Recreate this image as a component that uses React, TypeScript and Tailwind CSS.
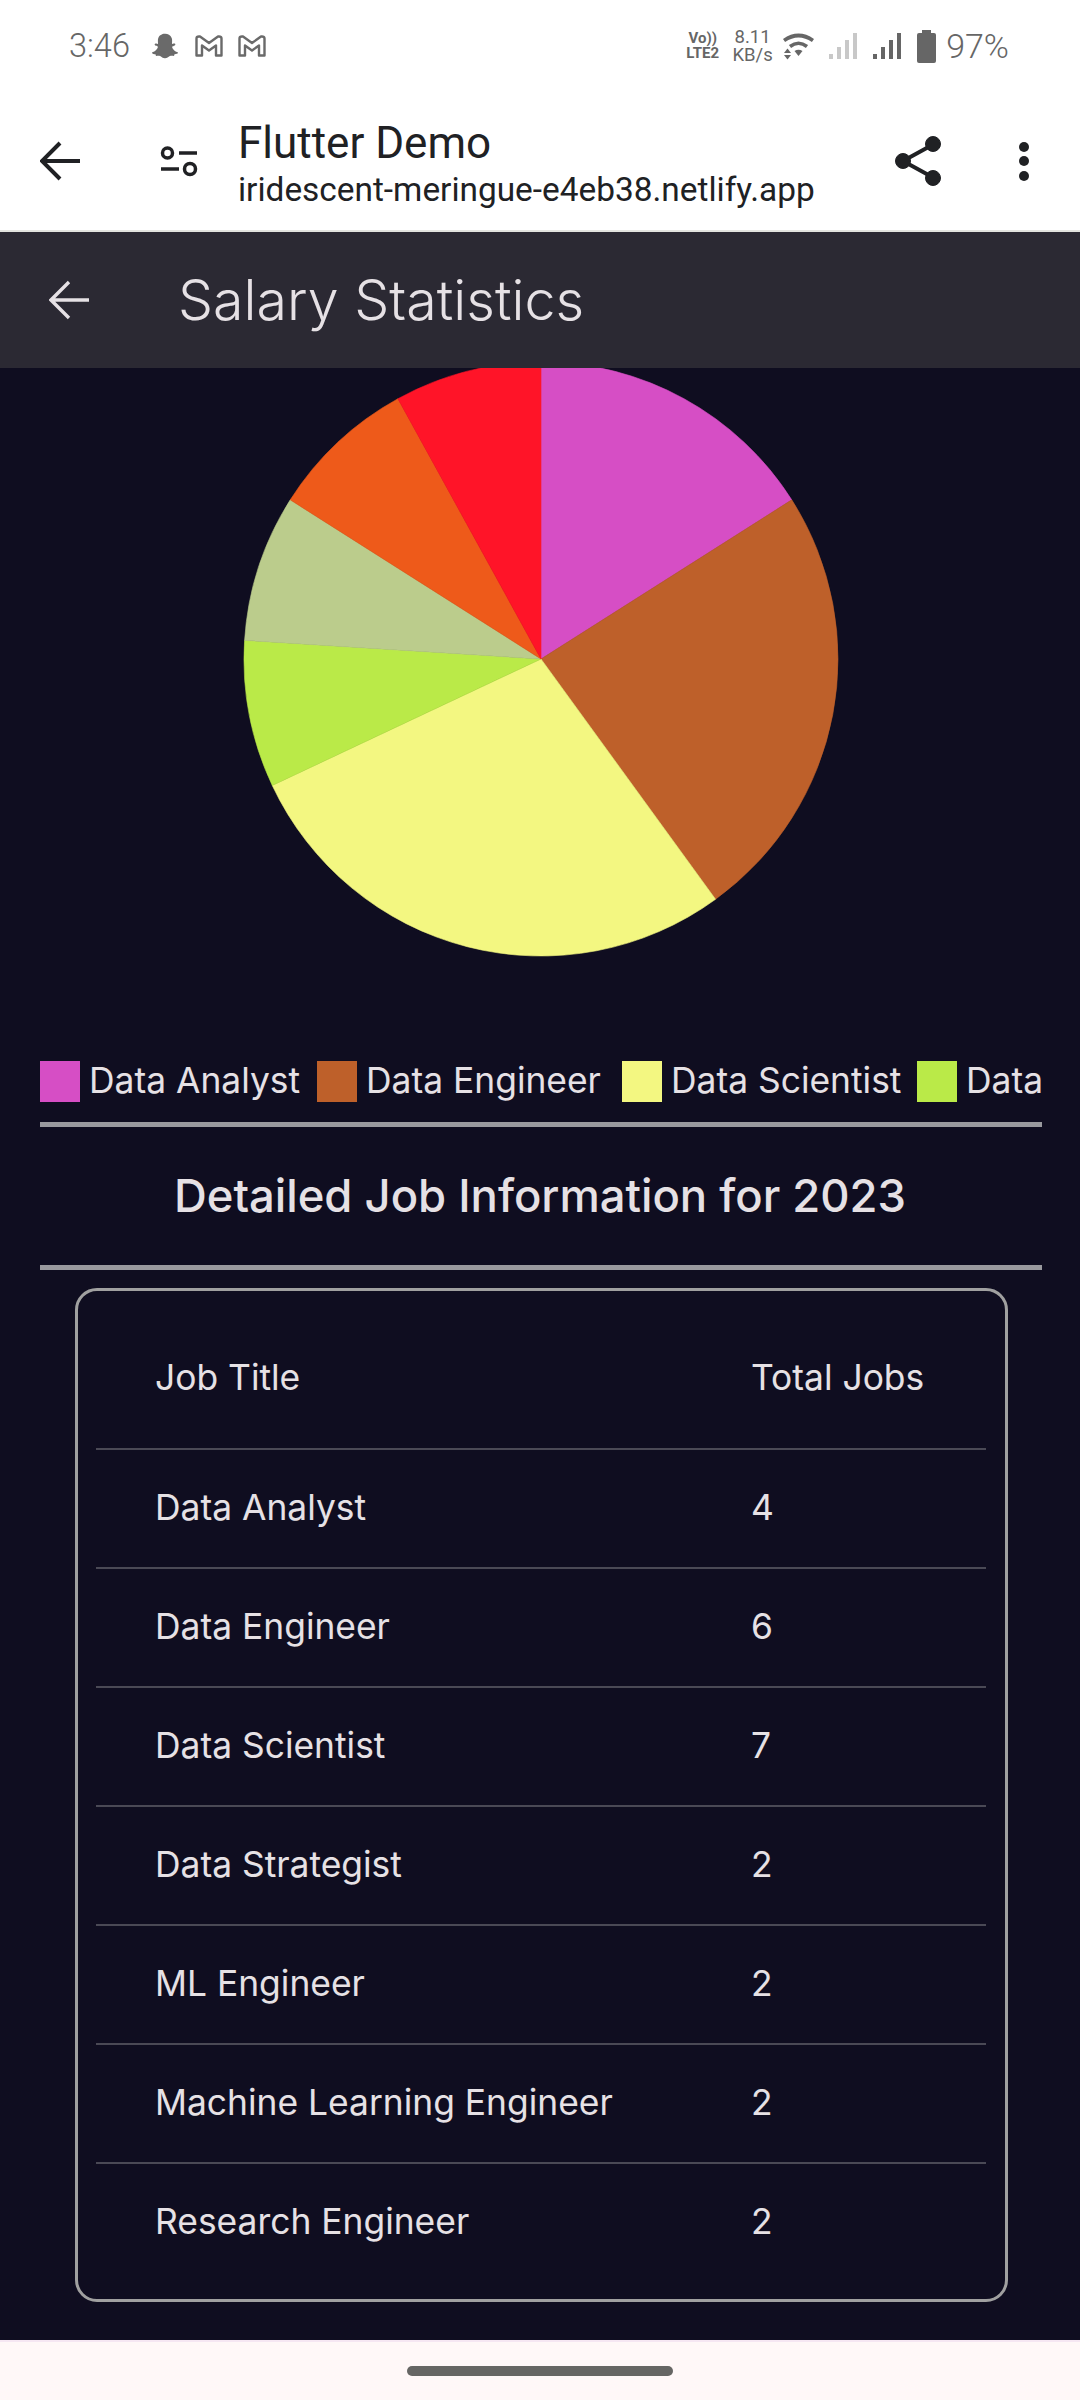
import { FaSnapchatGhost } from 'react-icons/fa';

const jobs = [
  { title: 'Data Analyst', total: 4, color: '#D64EC5', legendWidth: 'w-[277px]' },
  { title: 'Data Engineer', total: 6, color: '#BE602A', legendWidth: 'w-[305px]' },
  { title: 'Data Scientist', total: 7, color: '#F3F781', legendWidth: 'w-[295px]' },
  { title: 'Data Strategist', total: 2, color: '#BAEA48', legendWidth: 'w-[300px]' },
  { title: 'ML Engineer', total: 2, color: '#BBCC8C', legendWidth: 'w-[260px]' },
  { title: 'Machine Learning Engineer', total: 2, color: '#EE5A1A', legendWidth: 'w-[520px]' },
  { title: 'Research Engineer', total: 2, color: '#FF1428', legendWidth: 'w-[370px]' },
];

const sum = jobs.reduce((acc, job) => acc + job.total, 0);

function slicePath(from: number, to: number) {
  const cx = 541;
  const cy = 659;
  const r = 297;
  const a = (from / sum) * Math.PI * 2;
  const b = (to / sum) * Math.PI * 2;
  const x1 = cx + r * Math.sin(a);
  const y1 = cy - r * Math.cos(a);
  const x2 = cx + r * Math.sin(b);
  const y2 = cy - r * Math.cos(b);
  const large = b - a > Math.PI ? 1 : 0;
  return `M${cx} ${cy}L${x1} ${y1}A${r} ${r} 0 ${large} 1 ${x2} ${y2}Z`;
}

function GmailIcon() {
  return (
    <svg width="28" height="22" viewBox="0 0 28 22" fill="none" stroke="#6a6a6a" strokeWidth="2.4" strokeLinejoin="round">
      <path d="M1.5 3.5V20.5H7V10.5L14 15.5L21 10.5V20.5H26.5V3.5Q26.5 1.5 24 1.5H23L14 8L5 1.5H4Q1.5 1.5 1.5 3.5Z" />
    </svg>
  );
}

function SignalIcon({ color }: { color: string }) {
  return (
    <svg width="28" height="26" viewBox="0 0 28 26" fill={color}>
      <rect x="0" y="21" width="4" height="5" />
      <rect x="8" y="14" width="4" height="12" />
      <rect x="16" y="7" width="4" height="19" />
      <rect x="24" y="0" width="4" height="26" />
    </svg>
  );
}

function WifiIcon() {
  return (
    <svg width="31" height="27" viewBox="0 0 31 27" fill="#666666">
      <path d="M1 7.5Q15.5 -2.5 30 7.5" fill="none" stroke="#666666" strokeWidth="3.8" />
      <path d="M7 13.5Q15.5 7 24 13.5" fill="none" stroke="#666666" strokeWidth="3.6" />
      <path d="M11.5 18Q15.5 15.5 19.5 18L15.5 23Z" />
      <path d="M1 20L4.5 15.5L8 20Z" />
      <path d="M1 22H8L4.5 26.5Z" />
    </svg>
  );
}

function StatusBar() {
  return (
    <div className="flex h-[92px] items-center justify-between pl-[69px] pr-[71px] text-[#666666] font-['Roboto',sans-serif]">
      <div className="flex items-center">
        <span className="w-[83px] text-[32.5px] font-light leading-none">3:46</span>
        <FaSnapchatGhost size={26} color="#6a6a6a" />
        <div className="ml-[17px]">
          <GmailIcon />
        </div>
        <div className="ml-[15px]">
          <GmailIcon />
        </div>
      </div>
      <div className="flex items-center">
        <div className="flex flex-col items-center text-[15px] font-bold leading-[15px]">
          <span>Vo))</span>
          <span>LTE2</span>
        </div>
        <div className="ml-[13px] flex w-[41px] flex-col items-center text-[18.5px] leading-[18.5px]">
          <span>8.11</span>
          <span>KB/s</span>
        </div>
        <div className="ml-[10px]">
          <WifiIcon />
        </div>
        <div className="ml-[15px]">
          <SignalIcon color="#c8c8c8" />
        </div>
        <div className="ml-[16px]">
          <SignalIcon color="#666666" />
        </div>
        <svg className="ml-[16px]" width="19" height="33" viewBox="0 0 19 33" fill="#666666">
          <rect x="5" y="0" width="9" height="4" />
          <rect x="0" y="3" width="19" height="30" rx="2" />
        </svg>
        <span className="ml-[10px] text-[34px] font-light leading-none">97%</span>
      </div>
    </div>
  );
}

function BrowserBar() {
  return (
    <div className="flex h-[138px] items-center bg-white pl-[40px] text-[#202124]">
      <svg width="40" height="40" viewBox="0 0 40 40" fill="none" stroke="#202124" strokeWidth="4">
        <path d="M40 20H3M20 2L2 20L20 38" />
      </svg>
      <svg className="ml-[80px]" width="38" height="32" viewBox="0 0 38 32" fill="none" stroke="#202124" strokeWidth="3.5">
        <circle cx="7.5" cy="8" r="5" />
        <path d="M19 8H37M1 24H19" />
        <circle cx="30" cy="24" r="5.5" />
      </svg>
      <div className="ml-[40px] flex flex-col pt-[7px] font-['Roboto',sans-serif]">
        <span className="text-[44px] leading-[46px]">Flutter Demo</span>
        <span className="mt-[4px] text-[33.4px] leading-[40px]">iridescent-meringue-e4eb38.netlify.app</span>
      </div>
      <svg className="ml-auto" width="46" height="50" viewBox="0 0 46 50" fill="#202124" stroke="#202124">
        <path d="M39 8L8 25L39 42" fill="none" strokeWidth="4" />
        <circle cx="38" cy="8" r="7.5" />
        <circle cx="8" cy="25" r="7.5" />
        <circle cx="38" cy="42" r="7.5" />
      </svg>
      <div className="ml-[78px] mr-[51px] flex flex-col gap-[4.5px]">
        <div className="h-[10px] w-[10px] rounded-full bg-[#202124]" />
        <div className="h-[10px] w-[10px] rounded-full bg-[#202124]" />
        <div className="h-[10px] w-[10px] rounded-full bg-[#202124]" />
      </div>
    </div>
  );
}

function PieChart() {
  let running = 0;
  return (
    <svg className="block" width="1080" height="672" viewBox="0 368 1080 672">
      {jobs.map((job) => {
        const start = running;
        running += job.total;
        return <path key={job.title} d={slicePath(start, running)} fill={job.color} stroke={job.color} strokeWidth="0.6" />;
      })}
    </svg>
  );
}

function Legend() {
  return (
    <div className="ml-[40px] mr-[38px] mt-[19px] flex h-[44px] items-center overflow-hidden">
      {jobs.map((job) => (
        <div key={job.title} className={`flex shrink-0 items-center gap-[9px] ${job.legendWidth}`}>
          <div className="h-[41px] w-[40px]" style={{ backgroundColor: job.color }} />
          <span className="whitespace-nowrap text-[35.4px] font-[380] leading-[44px]">{job.title}</span>
        </div>
      ))}
    </div>
  );
}

export default function App() {
  return (
    <div className="flex h-[2400px] w-[1080px] flex-col overflow-hidden bg-white font-['Inter',sans-serif]">
      <StatusBar />
      <BrowserBar />
      <div className="h-[2px] bg-[#e2e3df]" />
      <div className="flex h-[136px] items-center bg-[#2B2933] pl-[49px] text-[#E6E1E5]">
        <svg width="40" height="40" viewBox="0 0 40 40" fill="none" stroke="#E6E1E5" strokeWidth="3.4">
          <path d="M40 20H3M20 2L2 20L20 38" />
        </svg>
        <span className="ml-[89px] text-[55.5px] font-[350] leading-none">Salary Statistics</span>
      </div>
      <div className="h-[1972px] overflow-hidden bg-[#0F0D20] text-[#E6E1E5]">
        <PieChart />
        <Legend />
        <div className="ml-[40px] mr-[38px] mt-[19px] h-[5px] bg-[#99999E]" />
        <div className="flex h-[138px] items-center justify-center text-[45.4px] font-medium">
          Detailed Job Information for 2023
        </div>
        <div className="ml-[40px] mr-[38px] h-[5px] bg-[#99999E]" />
        <div className="ml-[75px] mr-[72px] mt-[18px] h-[1014px] rounded-[22px] border-[3px] border-[#A0A0A0] pl-[18px] pr-[19px] pt-[18px]">
          <div className="flex h-[141px] items-center border-b-[2px] border-[#4A4955] pb-[1px] pl-[59px] text-[35.4px] font-[380]">
            <span className="w-[596px]">Job Title</span>
            <span>Total Jobs</span>
          </div>
          {jobs.map((job, index) => (
            <div
              key={job.title}
              className={`flex h-[119px] items-center pl-[59px] text-[35.4px] font-[380] ${
                index < jobs.length - 1 ? 'border-b-[2px] border-[#4A4955] pb-[1px]' : 'pb-[3px]'
              }`}
            >
              <span className="w-[596px]">{job.title}</span>
              <span>{job.total}</span>
            </div>
          ))}
        </div>
      </div>
      <div className="h-[2px] bg-[#F6E7F3]" />
      <div className="flex flex-1 items-center justify-center bg-[#FFF8F8]">
        <div className="h-[10px] w-[266px] rounded-full bg-[#666664]" />
      </div>
    </div>
  );
}
